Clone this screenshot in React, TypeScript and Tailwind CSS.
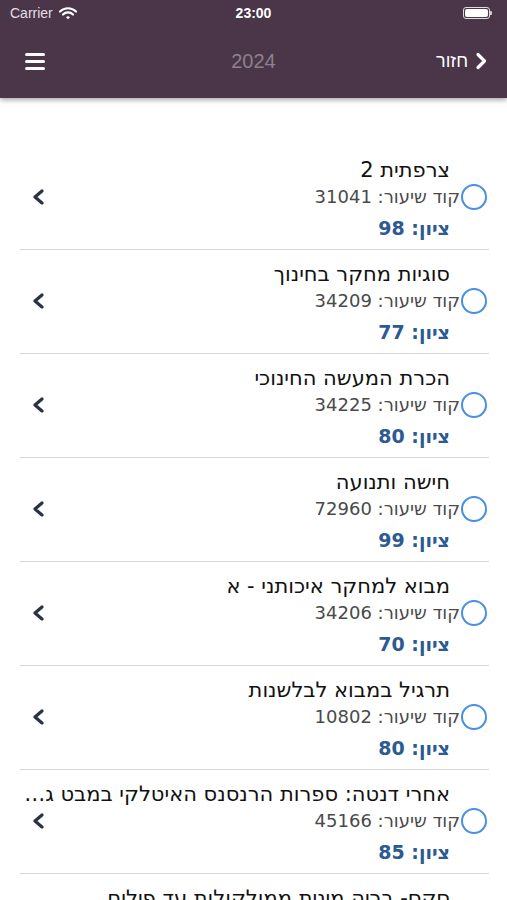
import React from "react";

const rows = [
  { t: "צרפתית 2", c: "31041", g: "98" },
  { t: "סוגיות מחקר בחינוך", c: "34209", g: "77" },
  { t: "הכרת המעשה החינוכי", c: "34225", g: "80" },
  { t: "חישה ותנועה", c: "72960", g: "99" },
  { t: "מבוא למחקר איכותני - א", c: "34206", g: "70" },
  { t: "תרגיל במבוא לבלשנות", c: "10802", g: "80" },
  { t: "אחרי דנטה: ספרות הרנסנס האיטלקי במבט גלובלי", c: "45166", g: "85" },
  { t: "סקס- בריה מינית ממולקולות עד פילים", c: "20237", g: "90" },
];

function Chevron() {
  return (
    <svg width="14" height="16" viewBox="0 0 14 16">
      <path d="M11 2 L4 8 L11 14" fill="none" stroke="#2b3244" strokeWidth="3.2" strokeLinecap="round" strokeLinejoin="round" />
    </svg>
  );
}

function Row({ t, c, g }: { t: string; c: string; g: string }) {
  return (
    <div dir="rtl" className="flex flex-col h-[104px] border-b border-[#d8d8d8] pt-[12px]">
      <div className="pr-[39px] pl-[4px] h-[24px] leading-[24px] text-[21px] text-[#111] truncate" style={{ fontFamily: '"DejaVu Sans", sans-serif' }}>{t}</div>
      <div className="mt-[2px] h-[26px] flex items-center">
        <div className="w-[26px] h-[26px] mr-[2px] rounded-full border-2 border-[#4a8fe0] shrink-0" />
        <div className="mr-[1px] text-[18px] leading-[26px] text-[#4a4a4a]" style={{ fontFamily: '"DejaVu Sans", sans-serif' }}>קוד שיעור: {c}</div>
        <div className="mr-auto pl-[11px] flex items-center">
          <Chevron />
        </div>
      </div>
      <div className="mt-[6px] pr-[39px] h-[24px] leading-[24px] text-[19px] font-bold text-[#2c5a92]" style={{ fontFamily: '"DejaVu Sans", sans-serif' }}>ציון: {g}</div>
    </div>
  );
}

export default function App() {
  return (
    <div className="w-[507px] h-[900px] overflow-hidden bg-white relative" style={{ fontFamily: '"Liberation Sans", "DejaVu Sans", Arial, sans-serif' }}>
      <div className="bg-[#4a3549] relative z-10 shadow-[0_2px_5px_rgba(0,0,0,0.35)]">
        {/* status bar */}
        <div className="h-[26px] flex items-center px-[10px] relative">
          <div className="flex items-center gap-[6px] flex-1">
            <span className="text-[14px] text-[#e4dfe4]">Carrier</span>
            <svg width="18" height="13" viewBox="0 0 18 13">
              <path d="M1 4.5 A11.5 11.5 0 0 1 17 4.5" fill="none" stroke="#fff" strokeWidth="2.2" strokeLinecap="round" />
              <path d="M4 7.5 A7 7 0 0 1 14 7.5" fill="none" stroke="#fff" strokeWidth="2.2" strokeLinecap="round" />
              <path d="M7 10.3 L9 12.3 L11 10.3 A2.8 2.8 0 0 0 7 10.3 Z" fill="#fff" />
            </svg>
          </div>
          <div className="absolute left-0 right-0 top-0 h-[26px] flex items-center justify-center">
            <span className="text-[14px] font-bold text-white">23:00</span>
          </div>
          <div className="flex items-center mr-[5px]">
            <div className="w-[27px] h-[12px] rounded-[3px] border border-[#ddd] p-[1px]">
              <div className="w-full h-full bg-white rounded-[2px]" />
            </div>
            <div className="w-[2px] h-[4px] bg-[#ccc] rounded-r-[1px]" />
          </div>
        </div>
        {/* nav bar */}
        <div className="h-[72px] flex items-center justify-between px-[25px] pb-[2px] relative">
          <div className="flex flex-col gap-[4px] w-[20px]">
            <div className="h-[3px] bg-white rounded-full" />
            <div className="h-[3px] bg-white rounded-full" />
            <div className="h-[3px] bg-white rounded-full" />
          </div>
          <div className="absolute left-0 right-0 top-0 h-[70px] flex items-center justify-center pointer-events-none">
            <span className="text-[20px] text-[#8e808d] font-light">2024</span>
          </div>
          <div className="flex items-center gap-[7px] -mr-[5px]">
            <span className="text-[18px] text-white">חזור</span>
            <svg width="12" height="18" viewBox="0 0 12 18">
              <path d="M3 2.5 L9.5 9 L3 15.5" fill="none" stroke="#fff" strokeWidth="3.2" strokeLinecap="round" strokeLinejoin="round" />
            </svg>
          </div>
        </div>
      </div>
      <div className="pt-[48px] pl-[20px] pr-[18px]">
        {rows.map((r, i) => (
          <Row key={i} {...r} />
        ))}
      </div>
    </div>
  );
}
